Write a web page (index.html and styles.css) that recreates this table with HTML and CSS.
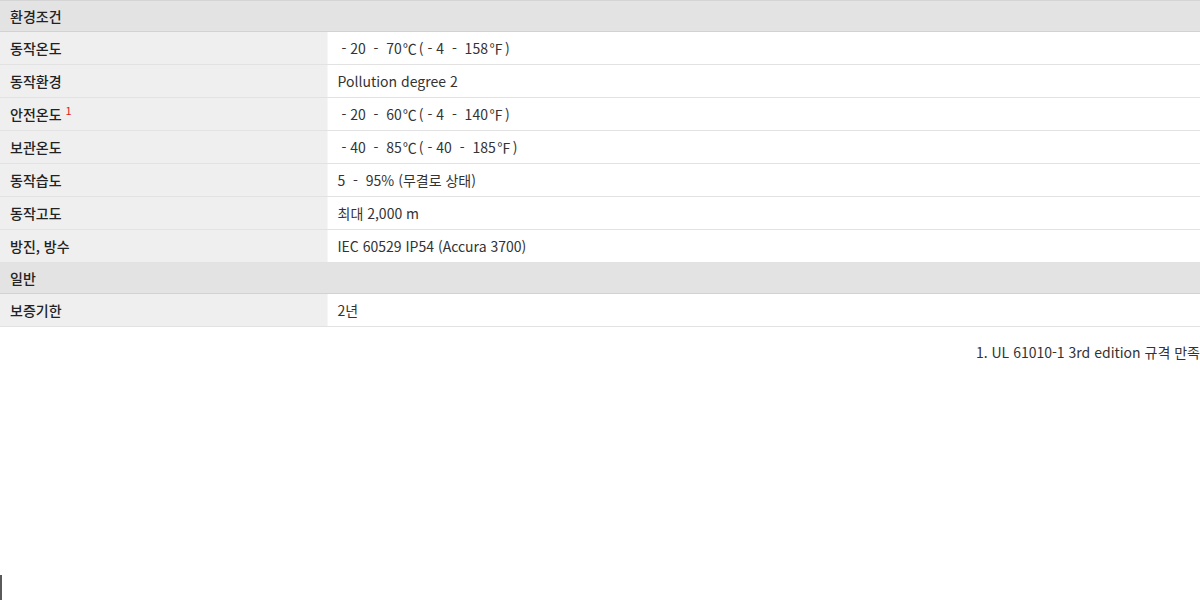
FILE: index.html
```html
<!DOCTYPE html>
<html lang="ko">
<head>
<meta charset="utf-8">
<link rel="stylesheet" href="styles.css">
</head>
<body>
<table class="spec">
  <tbody>
    <tr class="sec"><th colspan="2">환경조건</th></tr>
    <tr><th>동작온도</th><td>&nbsp;- 20 &nbsp;- &nbsp;70<span class="u">℃</span>( - 4 &nbsp;- &nbsp;158<span class="u">℉</span>)</td></tr>
    <tr><th>동작환경</th><td>Pollution degree 2</td></tr>
    <tr><th>안전온도 <sup class="fn">1</sup></th><td>&nbsp;- 20 &nbsp;- &nbsp;60<span class="u">℃</span>( - 4 &nbsp;- &nbsp;140<span class="u">℉</span>)</td></tr>
    <tr><th>보관온도</th><td>&nbsp;- 40 &nbsp;- &nbsp;85<span class="u">℃</span>( - 40 &nbsp;- &nbsp;185<span class="u">℉</span>)</td></tr>
    <tr><th>동작습도</th><td>5 &nbsp;- &nbsp;95% (무결로 상태)</td></tr>
    <tr><th>동작고도</th><td>최대 2,000 m</td></tr>
    <tr><th>방진, 방수</th><td>IEC 60529 IP54 (Accura 3700)</td></tr>
    <tr class="sec"><th colspan="2">일반</th></tr>
    <tr><th>보증기한</th><td>2년</td></tr>
  </tbody>
</table>
<p class="note">1. UL 61010-1 3rd edition 규격 만족</p>
<div class="edge"></div>
</body>
</html>
```
FILE: styles.css
```css
html, body {
  margin: 0;
  padding: 0;
  background: #fff;
}
body {
  font-family: "Noto Sans CJK KR", "Noto Sans", sans-serif;
  color: #333;
  font-size: 14px;
}
.spec {
  width: 100%;
  border-collapse: collapse;
  border-top: 1px solid #d4d4d4;
}
.spec th, .spec td {
  height: 33px;
  padding: 0 10px;
  border-bottom: 1px solid #e2e2e2;
  text-align: left;
  vertical-align: middle;
  box-sizing: border-box;
  line-height: 20px;
}
.spec th {
  width: 327px;
  background: #efefef;
  font-weight: 500;
  color: #222;
  border-right: 1px solid #f6f6f6;
}
.spec td {
  font-weight: 400;
  color: #333;
}
.spec .sec th {
  height: 31px;
  background: #e3e3e3;
  border-bottom: 1px solid #d2d2d2;
  border-right: none;
}
.u {
  display: inline-block;
  width: 16px;
  margin-left: 1px;
  font-size: 14px;
  letter-spacing: -1px;
}
.fn {
  color: #e02020;
  font-size: 11px;
  font-weight: 400;
  vertical-align: top;
  position: relative;
  top: -4px;
}
.note {
  margin: 15px 0 0;
  text-align: right;
  font-size: 14px;
  color: #333;
  line-height: 20px;
}
.edge {
  margin-top: 213px;
  width: 2px;
  height: 25px;
  background: #5a5a5a;
}
```
